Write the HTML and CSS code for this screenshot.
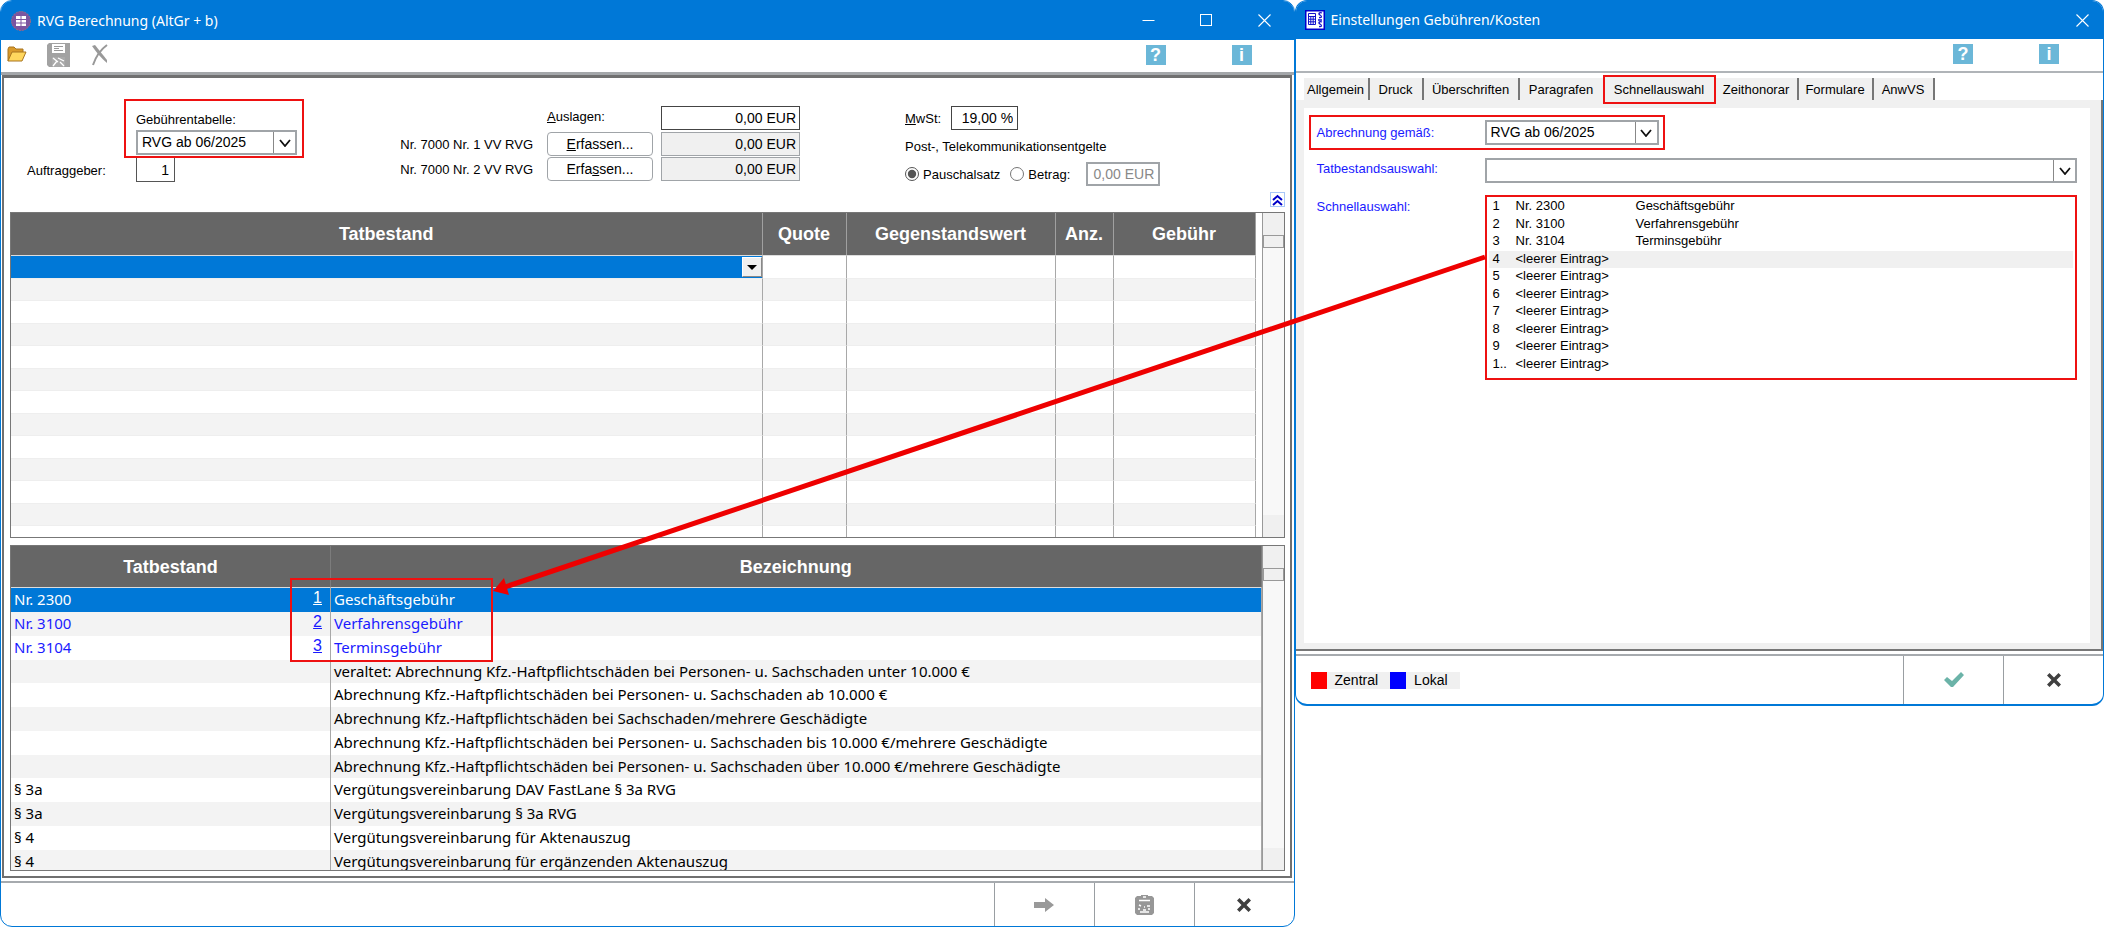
FILE: index.html
```
<!DOCTYPE html>
<html lang="de">
<head>
<meta charset="utf-8">
<title>RVG Berechnung</title>
<link rel="stylesheet" href="styles.css">
</head>
<body>
<svg class="defs" aria-hidden="true">
  <symbol id="chevron" viewBox="0 0 12 8"><path d="M1 1l5 6 5-6" fill="none" stroke="#111" stroke-width="1.8"/></symbol>
  <symbol id="close" viewBox="0 0 13 13"><path d="M.5.5l12 12M12.500.5l-12 12" fill="none" stroke="#fff" stroke-width="1.1"/></symbol>
  <symbol id="cross" viewBox="0 0 16 16"><path d="M3.500 1L8 5.500 12.500 1 15 3.500 10.500 8 15 12.500 12.500 15 8 10.500 3.500 15 1 12.500 5.500 8 1 3.500z" fill="#404040"/></symbol>
</svg>
<main class="screen">
  <section class="window calc">
    <header class="titlebar">
      <svg class="app-icon" viewBox="0 0 20 20"><circle cx="10" cy="10" r="9.500" fill="#7b55a0" stroke="#a06a80" stroke-dasharray="2 1"/><rect x="5" y="5" width="4.500" height="3" fill="#fff"/><rect x="10.500" y="5" width="4.500" height="3" fill="#fff"/><rect x="5" y="9" width="4.500" height="2.500" fill="#fff"/><rect x="10.500" y="9" width="4.500" height="2.500" fill="#fff"/><rect x="5" y="12.500" width="4.500" height="2.500" fill="#fff"/><rect x="10.500" y="12.500" width="4.500" height="2.500" fill="#fff"/></svg>
      <h1>RVG Berechnung (AltGr + b)</h1>
      <div class="caption-buttons">
        <button aria-label="Minimieren"><svg viewBox="0 0 13 13"><path d="M.5 6.500h12" stroke="#fff"/></svg></button>
        <button aria-label="Maximieren"><svg viewBox="0 0 13 13"><rect x=".5" y=".5" width="11" height="11" fill="none" stroke="#fff"/></svg></button>
        <button aria-label="Schließen"><svg viewBox="0 0 13 13"><use href="#close"/></svg></button>
      </div>
    </header>
    <div class="toolbar">
      <button aria-label="Öffnen"><svg width="20" height="18" viewBox="0 0 20 18"><path d="M1 15V3l1-2h5l2 2h7v3" fill="#d99a2b" stroke="#a87520"/><path d="M1 15L5 6h14l-4 9z" fill="#ffd75e" stroke="#a87520"/></svg></button>
      <button aria-label="Speichern"><svg width="24" height="24" viewBox="0 0 24 24"><path d="M2 0h21v24H2L0 22V2z" fill="#a2a2a2"/><path d="M5 1h13v9H5z" fill="#fff"/><path d="M7 3.500h9M7 5.500h5M7 7.500h9" stroke="#999"/><path d="M5 14h13v10H5z" fill="#aaa"/><path d="M6 15l5 4M6 23l4-5M11 15l6 3M13 19l4 4" stroke="#fff" stroke-width="1.300"/></svg></button>
      <button aria-label="Löschen"><svg width="18" height="22" viewBox="0 0 18 22"><path d="M1 2l3-1 12 15v3C10 14 6 9 1 2z" fill="#999"/><path d="M16 1C9 6 5 12 2 21" fill="none" stroke="#999" stroke-width="2"/></svg></button>
      <div class="help"><button class="badge" aria-label="Hilfe">?</button><button class="badge" aria-label="Info">i</button></div>
    </div>
    <div class="panel">
      <form class="form">
        <div class="col-table">
          <div class="marked">
            <label for="tab">Gebührentabelle:</label>
            <span class="combo"><select id="tab"><option>RVG ab 06/2025</option></select><i><svg width="12" height="8"><use href="#chevron"/></svg></i></span>
          </div>
          <div class="client"><label for="client">Auftra<u>gg</u>eber:</label><input id="client" value="1"></div>
        </div>
        <div class="col-costs">
          <span></span><label for="ausl"><u>A</u>uslagen:</label><input id="ausl" class="editable" value="0,00 EUR">
          <span class="r">Nr. 7000 Nr. 1 VV RVG</span><button type="button"><u>E</u>rfassen...</button><input aria-label="Nr. 7000 Nr. 1" value="0,00 EUR" readonly>
          <span class="r">Nr. 7000 Nr. 2 VV RVG</span><button type="button">Erfa<u>s</u>sen...</button><input aria-label="Nr. 7000 Nr. 2" value="0,00 EUR" readonly>
        </div>
        <div class="col-tax">
          <div><label for="mwst"><u>M</u>wSt:</label><input id="mwst" value="19,00 %"></div>
          <div>Post-, Telekommunikationsentgelte</div>
          <div><label class="radio"><input type="radio" name="post" checked>Pauschalsatz</label><label class="radio"><input type="radio" name="post">Betrag:</label><input class="amount" aria-label="Betrag" value="0,00 EUR" disabled></div>
        </div>
        <button type="button" class="collapse" aria-label="Einklappen"><svg width="11" height="12" viewBox="0 0 11 12"><path d="M1 6l4.500-4L10 6M1 11l4.500-4L10 11" fill="none" stroke="#0000c8" stroke-width="2"/></svg></button>
      </form>
      <div class="grid entries">
        <div class="clip">
          <table>
            <colgroup><col><col class="w-quote"><col class="w-value"><col class="w-count"><col class="w-fee"></colgroup>
            <thead><tr><th>Tatbestand</th><th>Quote</th><th>Gegenstandswert</th><th>Anz.</th><th>Gebühr</th></tr></thead>
            <tbody>
              <tr class="sel"><td><button class="drop" aria-label="Auswahl"></button></td><td></td><td></td><td></td><td></td></tr>
              <tr><td></td><td></td><td></td><td></td><td></td></tr>
              <tr><td></td><td></td><td></td><td></td><td></td></tr>
              <tr><td></td><td></td><td></td><td></td><td></td></tr>
              <tr><td></td><td></td><td></td><td></td><td></td></tr>
              <tr><td></td><td></td><td></td><td></td><td></td></tr>
              <tr><td></td><td></td><td></td><td></td><td></td></tr>
              <tr><td></td><td></td><td></td><td></td><td></td></tr>
              <tr><td></td><td></td><td></td><td></td><td></td></tr>
              <tr><td></td><td></td><td></td><td></td><td></td></tr>
              <tr><td></td><td></td><td></td><td></td><td></td></tr>
              <tr><td></td><td></td><td></td><td></td><td></td></tr>
              <tr><td></td><td></td><td></td><td></td><td></td></tr>
            </tbody>
          </table>
        </div>
        <div class="scroll"><span class="up"></span><span class="thumb"></span><span class="down"></span></div>
      </div>
      <div class="grid catalog">
        <div class="clip">
          <table>
            <colgroup><col class="w-facts"><col></colgroup>
            <thead><tr><th>Tatbestand</th><th>Bezeichnung</th></tr></thead>
            <tbody>
              <tr class="sel"><td>Nr. 2300<u>1</u></td><td>Geschäftsgebühr</td></tr>
              <tr class="quick"><td>Nr. 3100<u>2</u></td><td>Verfahrensgebühr</td></tr>
              <tr class="quick"><td>Nr. 3104<u>3</u></td><td>Terminsgebühr</td></tr>
              <tr><td></td><td>veraltet: Abrechnung Kfz.-Haftpflichtschäden bei Personen- u. Sachschaden unter 10.000 €</td></tr>
              <tr><td></td><td>Abrechnung Kfz.-Haftpflichtschäden bei Personen- u. Sachschaden ab 10.000 €</td></tr>
              <tr><td></td><td>Abrechnung Kfz.-Haftpflichtschäden bei Sachschaden/mehrere Geschädigte</td></tr>
              <tr><td></td><td>Abrechnung Kfz.-Haftpflichtschäden bei Personen- u. Sachschaden bis 10.000 €/mehrere Geschädigte</td></tr>
              <tr><td></td><td>Abrechnung Kfz.-Haftpflichtschäden bei Personen- u. Sachschaden über 10.000 €/mehrere Geschädigte</td></tr>
              <tr><td>§ 3a</td><td>Vergütungsvereinbarung DAV FastLane § 3a RVG</td></tr>
              <tr><td>§ 3a</td><td>Vergütungsvereinbarung § 3a RVG</td></tr>
              <tr><td>§ 4</td><td>Vergütungsvereinbarung für Aktenauszug</td></tr>
              <tr><td>§ 4</td><td>Vergütungsvereinbarung für ergänzenden Aktenauszug</td></tr>
            </tbody>
          </table>
        </div>
        <div class="scroll"><span class="up"></span><span class="thumb"></span><span class="down"></span></div>
        <span class="quick-frame"></span>
      </div>
    </div>
    <footer class="footer">
      <button aria-label="Weiter"><svg width="20" height="14" viewBox="0 0 20 14"><path d="M0 4h11V0l9 7-9 7v-4H0z" fill="#999"/></svg></button>
      <button aria-label="Übernehmen"><svg width="19" height="20" viewBox="0 0 19 20"><path d="M2 1h4V0h7v1h4l2 2v15l-2 2H2l-2-2V3z" fill="#979797"/><path d="M4 5.500h11M8 2h3" stroke="#fff" stroke-width="1.500"/><path d="M4 10l2 1M12 11h3M9 12h1M3 14h2M8 15h3M13 14h2M5 17h9" stroke="#fff" stroke-width="1.400"/></svg></button>
      <button aria-label="Abbrechen"><svg width="16" height="16"><use href="#cross"/></svg></button>
    </footer>
  </section>

  <section class="window settings">
    <header class="titlebar">
      <svg class="app-icon" viewBox="0 0 20 20"><rect x=".75" y=".75" width="18.500" height="18.500" fill="#fff" stroke="#00c" stroke-width="1.500"/><path d="M3.500 3.500h7v11h-7zM3.500 6.500h7M5.800 6.500v8M8.200 6.500v8M3.500 9.200h7M3.500 11.800h7" fill="none" stroke="#11c"/><path d="M17 3c-3-1-4 1-2 2s2 3-1 2.500M17 12c-3-1-4 1-2 2s2 3-1 2.500M13 10h4" fill="none" stroke="#11c" stroke-width="1.300"/></svg>
      <h1>Einstellungen Gebühren/Kosten</h1>
      <div class="caption-buttons"><button aria-label="Schließen"><svg viewBox="0 0 13 13"><use href="#close"/></svg></button></div>
    </header>
    <div class="toolbar">
      <div class="help"><button class="badge" aria-label="Hilfe">?</button><button class="badge" aria-label="Info">i</button></div>
    </div>
    <nav class="tabs">
      <button>Allgemein</button><button>Druck</button><button>Überschriften</button><button>Paragrafen</button><button class="active">Schnellauswahl</button><button>Zeithonorar</button><button>Formulare</button><button>AnwVS</button>
    </nav>
    <div class="tab-body">
      <div class="sheet">
        <div class="field marked"><label for="acc">Abrechnung gemäß:</label><span class="combo"><select id="acc"><option>RVG ab 06/2025</option></select><i><svg width="12" height="8"><use href="#chevron"/></svg></i></span></div>
        <div class="field"><label for="facts">Tatbestandsauswahl:</label><span class="combo"><select id="facts"><option></option></select><i><svg width="12" height="8"><use href="#chevron"/></svg></i></span></div>
        <div class="field"><span class="lbl">Schnellauswahl:</span>
          <ul class="list">
            <li><span>1</span><span>Nr. 2300</span><span>Geschäftsgebühr</span></li>
            <li><span>2</span><span>Nr. 3100</span><span>Verfahrensgebühr</span></li>
            <li><span>3</span><span>Nr. 3104</span><span>Terminsgebühr</span></li>
            <li class="cur"><span>4</span><span>&lt;leerer Eintrag&gt;</span></li>
            <li><span>5</span><span>&lt;leerer Eintrag&gt;</span></li>
            <li><span>6</span><span>&lt;leerer Eintrag&gt;</span></li>
            <li><span>7</span><span>&lt;leerer Eintrag&gt;</span></li>
            <li><span>8</span><span>&lt;leerer Eintrag&gt;</span></li>
            <li><span>9</span><span>&lt;leerer Eintrag&gt;</span></li>
            <li><span>1..</span><span>&lt;leerer Eintrag&gt;</span></li>
          </ul>
        </div>
      </div>
    </div>
    <footer class="footer">
      <div class="legend"><i class="red"></i><span>Zentral</span><i class="blue"></i><span>Lokal</span></div>
      <button aria-label="OK"><svg width="20" height="16" viewBox="0 0 20 16"><path d="M0 8l3-3 5 4 9-9 3 3L9 15H7z" fill="#6bb3a8"/></svg></button>
      <button aria-label="Abbrechen"><svg width="16" height="16"><use href="#cross"/></svg></button>
    </footer>
  </section>
  <svg class="arrow" viewBox="0 0 2104 927" preserveAspectRatio="none"><path d="M1485 257L505 587" stroke="#e00" stroke-width="5"/><path d="M493 591l11-13 5 17z" fill="#e00"/></svg>
</main>
</body>
</html>
```
FILE: styles.css
```
* { box-sizing: border-box; }
body { margin: 0; background: #fff; font: 13px/17px "Liberation Sans", Arial, sans-serif; color: #000; }
button, input, select { font: inherit; color: inherit; margin: 0; }
button { padding: 0; border: 0; background: none; }
select, .form button, .form input { font-size: 14px; }
svg { display: block; overflow: visible; }
.defs { position: absolute; width: 0; height: 0; }
.screen { position: relative; display: flex; align-items: flex-start; min-height: 100vh; overflow: hidden; }
.window { display: flex; flex-direction: column; min-width: 0; border: 1px solid #0078d7; background: #fff; overflow: hidden; }
.calc { flex: 1295 1 0; min-height: 100vh; border-radius: 12px; }
.settings { flex: 809 1 0; border-radius: 12px; border-bottom-width: 2px; }

.titlebar { display: flex; align-items: center; height: 39px; padding-left: 10px; background: #0078d7; color: #fff; }
.titlebar h1 { flex: 1; margin: 0 0 0 6px; font: 14px/20px "Noto Sans", sans-serif; }
.app-icon { width: 20px; height: 20px; }
.settings .titlebar { height: 38px; padding-left: 9px; }
.caption-buttons { display: flex; gap: 45px; padding-right: 23px; }
.caption-buttons svg { width: 13px; height: 13px; }
.settings .caption-buttons { padding-right: 14px; }

.toolbar { display: flex; align-items: center; gap: 20px; height: 35px; padding: 0 0 2px 6px; border-bottom: 3px solid #a4a7aa; }
.settings .toolbar { height: 32px; border: 0; }
.help { display: flex; gap: 66px; margin-left: auto; padding-right: 42px; }
.badge { width: 20px; height: 20px; background: #6bb7d8; color: #fff; font: bold 18px/20px "Liberation Sans", sans-serif; }
.settings .help { padding-right: 44px; }

.panel { border: 2px solid #707070; border-top-width: 3px; margin: 0 2px 0 1px; padding: 0 5px 5px 6px; }
.form { display: flex; height: 134px; position: relative; }
.col-table { width: 297px; padding-top: 21px; padding-left: 114px; }
.marked { border: 2px solid #ee1111; }
.col-table .marked { width: 180px; height: 59px; padding: 10px 5px 0 10px; }
.col-table .marked label { display: block; }
.combo { position: relative; display: flex; height: 25px; border: 2px solid #a0a4a8; background: #fff; }
.combo select { flex: 1; width: 100%; appearance: none; border: 0; padding: 0 4px; background: none; }
.combo i { position: absolute; top: 0; right: 0; bottom: 0; width: 22px; display: grid; place-items: center; border-left: 1px solid #888; pointer-events: none; }
.col-table .marked .combo { margin-top: 2px; }
.client { display: flex; align-items: center; margin-left: -97px; }
.client label { width: 109px; }
.client input { width: 39px; height: 24px; padding: 0 5px; border: 1px solid #555; border-top: 0; text-align: right; }
.col-costs { display: grid; grid-template-columns: 148px 106px 139px; grid-template-rows: 26px 24px 24px; column-gap: 8px; row-gap: 1px; align-items: center; align-content: start; padding-top: 27px; margin-left: 84px; }
.col-costs .r { text-align: right; padding-right: 6px; white-space: nowrap; }
.col-costs label { padding-bottom: 3px; }
.col-costs button { height: 24px; border: 1px solid #a0a4a8; border-radius: 4px; background: #fff; }
.col-costs input { width: 100%; height: 24px; padding: 0 3px; border: 1px solid #a0a4a8; background: #f0f0f0; text-align: right; }
.col-costs .editable { border: 1px solid #444; background: #fff; }
.col-tax { flex: 1; padding: 26px 0 0 105px; }
.col-tax > div { display: flex; align-items: center; height: 28px; white-space: nowrap; }
.col-tax #mwst { width: 67px; height: 24px; margin-left: 10px; border: 1px solid #444; padding: 0 4px; text-align: right; }
.radio { display: flex; align-items: center; gap: 4px; margin-right: 10px; }
.radio input { width: 14px; height: 14px; accent-color: #555; }
.col-tax .amount { width: 74px; height: 24px; padding: 0 4px; margin-left: 6px; border: 2px solid #a0a4a8; background: #fff; color: #888; text-align: right; }
.collapse { position: absolute; right: 0; bottom: 5px; width: 15px; height: 15px; display: grid; place-items: center; border: 1px solid #a8c8f8; }

.grid { position: relative; display: flex; height: 326px; border: 1px solid #777; }
.catalog { margin-top: 7px; }
.clip { flex: 1; min-width: 0; overflow: hidden; }
table { width: 100%; border-collapse: separate; border-spacing: 0; table-layout: fixed; }
th { height: 43px; padding: 0; background: #666; color: #fff; font: bold 18px/20px "Liberation Sans", sans-serif; border-right: 1px solid #a0a0a0; border-bottom: 1px solid #ddd; }
td { padding: 0; border-right: 1px solid #a8a8a8; white-space: nowrap; overflow: hidden; }
tbody tr:nth-child(even) { background: #f3f3f3; }
.entries td { height: 23px; border-bottom: 1px solid #eee; }
.entries tr:nth-child(even) td { height: 22px; }
.entries .clip { padding-right: 6px; }
.entries .sel td:first-child { background: #0078d7; }
.w-quote { width: 84px; } .w-value { width: 209px; } .w-count { width: 58px; } .w-fee { width: 142px; }
.drop { display: grid; place-items: center; width: 20px; height: 20px; margin-left: auto; background: #f0f0f0; border: 1px solid #888; border-left-color: #fff; border-top-color: #fff; }
.drop::before { content: ""; border: 5px solid transparent; border-top-color: #000; border-bottom: 0; }
.catalog th { height: 42px; border-right-color: #7c7c7c; }
.catalog td { height: 24px; padding: 0 3px; font: 15px/22px "Noto Sans", sans-serif; vertical-align: top; }
.catalog tr:nth-child(4n) td { height: 23px; }
.catalog u { float: right; padding-right: 5px; font: 16px/20px "Liberation Sans", sans-serif; }
.w-facts { width: 320px; }
.catalog .sel { background: #0078d7; color: #fff; }
.quick { color: #1a1aff; }
.scroll { width: 22px; display: flex; flex-direction: column; border-left: 1px solid #999; background: #f8f8f8; }
.scroll .up { height: 22px; background: #f0f0f0; }
.scroll .thumb { height: 13px; background: #f0f0f0; border: 1px solid #999; }
.scroll .down { height: 22px; margin-top: auto; background: #f0f0f0; }
.quick-frame { position: absolute; left: 279px; top: 32px; width: 203px; height: 84px; border: 2px solid #ee1111; }

.footer { display: flex; justify-content: flex-end; flex: 1; min-height: 45px; margin-top: 3px; border-top: 2px solid #a6aaae; }
.footer button { width: 100px; display: grid; place-items: center; border-left: 1px solid #999ea2; }

.tabs { display: grid; grid-template-columns: 66px 54px 96px 83px 113px 83px 75px 61px; align-items: end; height: 29px; padding-left: 8px; border-top: 2px solid #b0b4b8; }
.tabs button { height: 22px; border-right: 2px solid #777; background: #f0f0f0; white-space: nowrap; }
.tabs button:nth-child(4) { border-right: 0; }
.tabs .active { height: 29px; margin-bottom: -4px; border: 2px solid #ee1111; z-index: 1; }
.tab-body { padding: 8px 11px 6px 8px; background: #f0f0f0; border-right: 2px solid #777; border-bottom: 2px solid #777; }
.sheet { height: 535px; padding: 7px 13px 0 5px; background: #fff; }
.field { display: flex; padding-left: 8px; color: #1a1aff; }
.field label, .lbl { width: 168px; flex: none; }
.field .combo { flex: 1; color: #000; }
.field.marked { width: 356px; height: 35px; padding: 3px 4px 3px 6px; align-items: center; }
.field + .field { margin-top: 8px; }
.field + .field label { padding-top: 2px; }
.field .list { flex: 1; margin: 4px 0 0; padding: 1px 2px; height: 185px; list-style: none; border: 2px solid #ee1111; color: #000; }
.field .lbl { padding-top: 7px; }
.list li { display: grid; grid-template-columns: 23px 120px 1fr; height: 18px; padding-left: 4px; line-height: 16px; }
.list li:nth-child(even) { height: 17px; }
.list .cur { background: #f0f0f0; }
.settings .footer { flex: none; height: 50px; }
.legend { display: flex; align-items: center; margin-right: auto; padding-left: 15px; font-size: 14px; }
.legend i { width: 16px; height: 17px; }
.legend span { padding: 0 12px 0 8px; background: #f0f0f0; }
.red { background: red; }
.blue { background: blue; }
.arrow { position: absolute; inset: 0; width: 100%; height: 927px; pointer-events: none; }
```
